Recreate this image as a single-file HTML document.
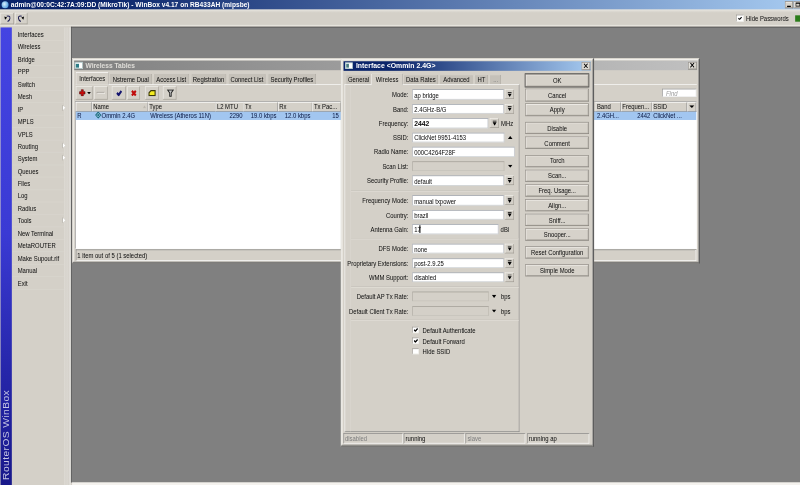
<!DOCTYPE html>
<html><head><meta charset="utf-8"><title>WinBox</title>
<style>
html,body{margin:0;padding:0;background:#d4d0c8;overflow:hidden;width:800px;height:485px;}
#root{position:absolute;left:0;top:0;filter:brightness(1);font-family:"Liberation Sans",sans-serif;font-size:11px;color:#101010;overflow:hidden;background:#d4d0c8;}
#root div,#root span,#root svg{position:absolute;box-sizing:border-box;}
.t{white-space:nowrap;line-height:14px;height:14px;-webkit-text-stroke:0.04px currentColor;}
.b{font-weight:bold;}
.w{color:#fff;}
.gray{color:#808080;}
.raised{border:1px solid;border-color:#fff #808080 #808080 #fff;background:#d4d0c8;}
.raised2{border:1px solid;border-color:#fff #404040 #404040 #fff;background:#d4d0c8;box-shadow:inset -1px -1px 0 #808080;}
.sunken{border:1px solid;border-color:#808080 #fff #fff #808080;background:#fff;box-shadow:inset 1px 1px 0 #404040;}
.sunkenflat{border:1px solid;border-color:#808080 #fff #fff #808080;background:#d4d0c8;}
.inp{border:1px solid;border-color:#8a8f98 #b4b8c0 #c4c8cc #a0a4ac;background:#fff;}
.inpd{border:1px solid;border-color:#9a968e #b8b4ac #c4c0b8 #a8a49c;background:#d4d0c8;}
.btn{border:1px solid;border-color:#8e8a84 #76726c #76726c #8e8a84;background:#d6d2ca;box-shadow:inset 1px 1px 0 #f6f4f0, inset -1px -1px 0 #b4b0a8;}
.win{background:#d4d0c8;border:1px solid;border-width:1px 2px 2px 1px;border-color:#dcd9d2 #5c5c5c #5c5c5c #dcd9d2;box-shadow:inset 1px 1px 0 #fff, inset -1px -1px 0 #808080, inset 2px 2px 0 #eceae4, inset 3px 3px 0 #e2dfd8;}
.raisedsoft{border:1px solid;border-color:#f4f2ee #9c988f #9c988f #f4f2ee;background:#d4d0c8;}
.chk{border:1px solid;border-color:#8c8880 #ecebe6 #ecebe6 #8c8880;background:#fff;}

#root{width:1488.0px;height:760.0px;transform:scale(0.537634,0.638158);transform-origin:0 0;}
</style></head><body><div id="root">
<div class="" style="left:0.0px;top:0.0px;width:1488.0px;height:15.2px;background:linear-gradient(to right,#0a246a 0%,#0a246a 12%,#a6caf0 100%);"></div>
<div class="" style="left:2.79px;top:1.88px;width:13.02px;height:11.28px;border-radius:50%;background:radial-gradient(circle at 40% 40%,#d8f0ff,#5aa0e0 70%,#2a60b0);"></div>
<span class="t b w" style="left:20.27px;top:-0.11px;font-size:12.2px;transform:scaleX(1.009);transform-origin:0 50%;-webkit-text-stroke:0;">admin@00:0C:42:7A:09:DD (MikroTik) - WinBox v4.17 on RB433AH (mipsbe)</span>
<div class="btn" style="left:1460.1px;top:2.35px;width:14.88px;height:10.5px;"></div>
<div class="" style="left:1464.38px;top:9.4px;width:6.88px;height:1.72px;background:#000;"></div>
<div class="btn" style="left:1475.91px;top:2.35px;width:13.95px;height:10.5px;"></div>
<div class="" style="left:1479.82px;top:4.39px;width:8.18px;height:5.64px;border:1px solid #000;border-top-width:2px;"></div>
<div class="" style="left:0.0px;top:15.2px;width:1488.0px;height:27.42px;background:linear-gradient(to bottom,#f2f0ea 0,#e0ddd6 1.6px,#d4d0c8 5px);"></div>
<div class="" style="left:0.0px;top:39.49px;width:1488.0px;height:1.57px;background:#e6e3dc;"></div>
<div class="raisedsoft" style="left:1.49px;top:19.59px;width:24.92px;height:18.65px;"></div>
<div class="raisedsoft" style="left:28.46px;top:19.59px;width:22.51px;height:18.65px;"></div>
<svg style="left:5.58px;top:22.72px;width:14.88px;height:12.54px" viewBox="3 14.5 8 8"><path d="M6.4 16.1C8.6 15.2 10.6 16.4 10.3 18.2C10 19.8 8.9 20.7 7.4 21.3" fill="none" stroke="#1c1c50" stroke-width="1.15"/><path d="M3.6 16.2L6.9 17.3 4.4 19.6z" fill="#000"/></svg>
<svg style="left:32.36px;top:22.72px;width:14.88px;height:12.54px" viewBox="-11 14.5 8 8"><g transform="scale(-1,1)"><path d="M6.4 16.1C8.6 15.2 10.6 16.4 10.3 18.2C10 19.8 8.9 20.7 7.4 21.3" fill="none" stroke="#1c1c50" stroke-width="1.15"/><path d="M3.6 16.2L6.9 17.3 4.4 19.6z" fill="#000"/></g></svg>
<div class="chk" style="left:1369.15px;top:23.19px;width:13.39px;height:10.97px;"></div>
<svg style="left:1371.75px;top:25.54px;width:8.93px;height:5.95px" viewBox="0 0 9 7"><path d="M1 3l2.4 2.5L8 1" fill="none" stroke="#000" stroke-width="2.3"/></svg>
<span class="t " style="left:1387.75px;top:22.15px;">Hide Passwords</span>
<div class="" style="left:1479.07px;top:23.51px;width:10.79px;height:10.97px;background:#2b7d1a;"></div>
<div class="" style="left:0.0px;top:42.62px;width:133.55px;height:717.38px;background:#d4d0c8;"></div>
<div class="" style="left:119.41px;top:42.62px;width:13.02px;height:717.38px;background:linear-gradient(to right,#d4d0c8 0,#dedbd5 10%,#d5d1ca 28%,#dcd9d3 45%,#d5d1ca 62%,#e0ddd8 82%,#e4e2dd 100%);"></div>
<div class="" style="left:1.3px;top:43.25px;width:20.83px;height:716.75px;background:linear-gradient(to bottom,#4444e2 0%,#3a3ad4 45%,#2626aa 75%,#18188a 100%);"></div>
<span class="t" style="left:10.23px;top:751.54px;color:#c4c4e4;font-size:15.5px;letter-spacing:0.6px;line-height:18px;height:18px;-webkit-text-stroke:0;transform-origin:0 50%;transform:translateY(-50%) scale(1.1870,0.8425) rotate(-90deg) scaleX(1.235);">RouterOS WinBox</span>
<span class="t " style="left:32.92px;top:46.75px;">Interfaces</span>
<div class="" style="left:23.06px;top:62.99px;width:95.98px;height:0.94px;background:#d9d6cf;"></div>
<span class="t " style="left:32.92px;top:66.24px;">Wireless</span>
<div class="" style="left:23.06px;top:82.49px;width:95.98px;height:0.94px;background:#d9d6cf;"></div>
<span class="t " style="left:32.92px;top:85.74px;">Bridge</span>
<div class="" style="left:23.06px;top:101.98px;width:95.98px;height:0.94px;background:#d9d6cf;"></div>
<span class="t " style="left:32.92px;top:105.23px;">PPP</span>
<div class="" style="left:23.06px;top:121.47px;width:95.98px;height:0.94px;background:#d9d6cf;"></div>
<span class="t " style="left:32.92px;top:124.72px;">Switch</span>
<div class="" style="left:23.06px;top:140.97px;width:95.98px;height:0.94px;background:#d9d6cf;"></div>
<span class="t " style="left:32.92px;top:144.22px;">Mesh</span>
<div class="" style="left:23.06px;top:160.46px;width:95.98px;height:0.94px;background:#d9d6cf;"></div>
<span class="t " style="left:32.92px;top:163.71px;">IP</span>
<div class="" style="left:23.06px;top:179.96px;width:95.98px;height:0.94px;background:#d9d6cf;"></div>
<svg style="left:114.58px;top:164.13px;width:7.44px;height:10.03px" viewBox="0 0 5 8"><path d="M0.3 0.2v7.6L4.4 4z" fill="#aaa69e"/><path d="M1.1 0.9v6.2L4.8 4z" fill="#fff"/></svg>
<span class="t " style="left:32.92px;top:183.2px;">MPLS</span>
<div class="" style="left:23.06px;top:199.45px;width:95.98px;height:0.94px;background:#d9d6cf;"></div>
<span class="t " style="left:32.92px;top:202.7px;">VPLS</span>
<div class="" style="left:23.06px;top:218.94px;width:95.98px;height:0.94px;background:#d9d6cf;"></div>
<span class="t " style="left:32.92px;top:222.19px;">Routing</span>
<div class="" style="left:23.06px;top:238.44px;width:95.98px;height:0.94px;background:#d9d6cf;"></div>
<svg style="left:114.58px;top:222.61px;width:7.44px;height:10.03px" viewBox="0 0 5 8"><path d="M0.3 0.2v7.6L4.4 4z" fill="#aaa69e"/><path d="M1.1 0.9v6.2L4.8 4z" fill="#fff"/></svg>
<span class="t " style="left:32.92px;top:241.68px;">System</span>
<div class="" style="left:23.06px;top:257.93px;width:95.98px;height:0.94px;background:#d9d6cf;"></div>
<svg style="left:114.58px;top:242.1px;width:7.44px;height:10.03px" viewBox="0 0 5 8"><path d="M0.3 0.2v7.6L4.4 4z" fill="#aaa69e"/><path d="M1.1 0.9v6.2L4.8 4z" fill="#fff"/></svg>
<span class="t " style="left:32.92px;top:261.18px;">Queues</span>
<div class="" style="left:23.06px;top:277.42px;width:95.98px;height:0.94px;background:#d9d6cf;"></div>
<span class="t " style="left:32.92px;top:280.67px;">Files</span>
<div class="" style="left:23.06px;top:296.92px;width:95.98px;height:0.94px;background:#d9d6cf;"></div>
<span class="t " style="left:32.92px;top:300.17px;">Log</span>
<div class="" style="left:23.06px;top:316.41px;width:95.98px;height:0.94px;background:#d9d6cf;"></div>
<span class="t " style="left:32.92px;top:319.66px;">Radius</span>
<div class="" style="left:23.06px;top:335.9px;width:95.98px;height:0.94px;background:#d9d6cf;"></div>
<span class="t " style="left:32.92px;top:339.15px;">Tools</span>
<div class="" style="left:23.06px;top:355.4px;width:95.98px;height:0.94px;background:#d9d6cf;"></div>
<svg style="left:114.58px;top:339.57px;width:7.44px;height:10.03px" viewBox="0 0 5 8"><path d="M0.3 0.2v7.6L4.4 4z" fill="#aaa69e"/><path d="M1.1 0.9v6.2L4.8 4z" fill="#fff"/></svg>
<span class="t " style="left:32.92px;top:358.65px;">New Terminal</span>
<div class="" style="left:23.06px;top:374.89px;width:95.98px;height:0.94px;background:#d9d6cf;"></div>
<span class="t " style="left:32.92px;top:378.14px;">MetaROUTER</span>
<div class="" style="left:23.06px;top:394.39px;width:95.98px;height:0.94px;background:#d9d6cf;"></div>
<span class="t " style="left:32.92px;top:397.63px;">Make Supout.rif</span>
<div class="" style="left:23.06px;top:413.88px;width:95.98px;height:0.94px;background:#d9d6cf;"></div>
<span class="t " style="left:32.92px;top:417.13px;">Manual</span>
<div class="" style="left:23.06px;top:433.37px;width:95.98px;height:0.94px;background:#d9d6cf;"></div>
<span class="t " style="left:32.92px;top:436.62px;">Exit</span>
<div class="" style="left:23.06px;top:452.87px;width:95.98px;height:0.94px;background:#d9d6cf;"></div>
<div class="" style="left:132.25px;top:41.53px;width:1355.75px;height:714.4px;background:#808080;border-left:1.5px solid #484848;border-top:1.3px solid #484848;"></div>
<div class="" style="left:133.55px;top:755.93px;width:1354.45px;height:4.07px;background:#f4f2ee;"></div>
<div class="win" style="left:133.92px;top:90.89px;width:1168.27px;height:322.49px;"></div>
<div class="" style="left:137.64px;top:94.96px;width:1159.15px;height:14.89px;background:linear-gradient(to right,#808080,#c0c0c0);"></div>
<div class="" style="left:139.13px;top:97.47px;width:15.25px;height:10.66px;background:#fff;border:1px solid #8aa;"></div>
<div class="" style="left:140.99px;top:99.66px;width:6.32px;height:6.58px;background:#2e7d86;"></div>
<span class="t b" style="left:159.22px;top:95.48px;color:#dddbd6;font-size:11.5px;transform:scaleX(1.07);transform-origin:0 50%;-webkit-text-stroke:0.1px #dddbd6;">Wireless Tables</span>
<div class="btn" style="left:1279.87px;top:97.0px;width:16.0px;height:12.38px;background:#dedbd4;"></div>
<svg style="left:1282.1px;top:98.41px;width:11.16px;height:8.15px" viewBox="0 0 8 8"><path d="M0.6 0.6l6.8 6.8M7.4 0.6l-6.8 6.8" stroke="#000" stroke-width="1.55"/></svg>
<div class="" style="left:140.62px;top:131.94px;width:1155.06px;height:1.25px;background:#fff;"></div>
<div class="" style="left:141.36px;top:112.82px;width:60.26px;height:20.37px;background:#d4d0c8;border:1px solid;border-color:#fff #808080 #d4d0c8 #fff;border-radius:2px 2px 0 0;"></div>
<span class="t " style="left:171.49px;top:115.54px;transform:translateX(-50%);">Interfaces</span>
<div class="" style="left:204.04px;top:115.33px;width:78.68px;height:16.61px;background:#c5c1b9;border:1px solid;border-color:#e4e1da #96928a transparent #e4e1da;border-radius:2px 2px 0 0;"></div>
<span class="t " style="left:243.38px;top:117.11px;transform:translateX(-50%);">Nstreme Dual</span>
<div class="" style="left:284.58px;top:115.33px;width:67.89px;height:16.61px;background:#c5c1b9;border:1px solid;border-color:#e4e1da #96928a transparent #e4e1da;border-radius:2px 2px 0 0;"></div>
<span class="t " style="left:318.53px;top:117.11px;transform:translateX(-50%);">Access List</span>
<div class="" style="left:354.52px;top:115.33px;width:66.96px;height:16.61px;background:#c5c1b9;border:1px solid;border-color:#e4e1da #96928a transparent #e4e1da;border-radius:2px 2px 0 0;"></div>
<span class="t " style="left:388.0px;top:117.11px;transform:translateX(-50%);">Registration</span>
<div class="" style="left:424.08px;top:115.33px;width:70.12px;height:16.61px;background:#c5c1b9;border:1px solid;border-color:#e4e1da #96928a transparent #e4e1da;border-radius:2px 2px 0 0;"></div>
<span class="t " style="left:459.14px;top:117.11px;transform:translateX(-50%);">Connect List</span>
<div class="" style="left:497.55px;top:115.33px;width:90.77px;height:16.61px;background:#c5c1b9;border:1px solid;border-color:#e4e1da #96928a transparent #e4e1da;border-radius:2px 2px 0 0;"></div>
<span class="t " style="left:542.93px;top:117.11px;transform:translateX(-50%);">Security Profiles</span>
<div class="raisedsoft" style="left:140.62px;top:135.23px;width:31.81px;height:20.84px;"></div>
<div class="raisedsoft" style="left:175.4px;top:135.23px;width:24.74px;height:20.84px;"></div>
<div class="raisedsoft" style="left:208.13px;top:135.23px;width:25.85px;height:20.84px;"></div>
<div class="raisedsoft" style="left:236.78px;top:135.23px;width:23.06px;height:20.84px;"></div>
<div class="raisedsoft" style="left:270.07px;top:135.23px;width:24.55px;height:20.84px;"></div>
<div class="raisedsoft" style="left:302.99px;top:135.23px;width:25.11px;height:20.84px;"></div>
<svg style="left:145.82px;top:140.25px;width:14.14px;height:10.97px" viewBox="0 0 10 10"><path d="M3.3 0.4h3.4v2.9h2.9v3.4H6.7v2.9H3.3V6.7H0.4V3.3h2.9z" fill="#c80c0c" stroke="#500808" stroke-width="0.9"/></svg>
<svg style="left:161.63px;top:144.16px;width:7.25px;height:3.92px" viewBox="0 0 6 3"><path d="M0 0h6l-3 3z" fill="#000"/></svg>
<div class="" style="left:180.42px;top:143.69px;width:14.32px;height:3.6px;border:1px solid;border-color:#a8a49c #f4f2ee #f4f2ee #a8a49c;background:#ccc8c0;"></div>
<svg style="left:215.39px;top:141.19px;width:13.39px;height:9.72px" viewBox="0 0 10 9"><path d="M1.2 4.2l2.9 3L8.8 1.6" fill="none" stroke="#14146e" stroke-width="3.3"/></svg>
<svg style="left:243.1px;top:141.34px;width:11.9px;height:10.03px" viewBox="0 0 8 8"><path d="M1.1 1.1l5.8 5.8M6.9 1.1L1.1 6.9" stroke="#c00c0c" stroke-width="3"/></svg>
<svg style="left:274.91px;top:140.87px;width:15.62px;height:9.87px" viewBox="0 0 12 9"><path d="M4.2 0.9h7v7.2H0.9V3.9z" fill="#f4ec20" stroke="#3a3808" stroke-width="1.8"/></svg>
<svg style="left:310.25px;top:140.09px;width:14.14px;height:11.91px" viewBox="0 0 10 10"><path d="M0.6 0.8h8.8L6.2 4.6v4.6H3.8V4.6z" fill="#c4c4c4" stroke="#202020" stroke-width="1.35"/></svg>
<div class="" style="left:1232.25px;top:138.52px;width:62.31px;height:13.79px;background:#fff;border:1px solid;border-color:#808080 #e8e8e8 #e8e8e8 #808080;"></div>
<span class="t " style="left:1238.76px;top:138.58px;color:#a0a0a0;font-style:italic;">Find</span>
<div class="" style="left:139.87px;top:158.89px;width:1155.8px;height:231.6px;background:#fff;border:1px solid;border-color:#808080 #fff #fff #808080;"></div>
<div class="" style="left:140.8px;top:159.84px;width:1154.13px;height:14.73px;background:#d4d0c8;border-bottom:1px solid #808080;"></div>
<div class="" style="left:140.8px;top:159.84px;width:30.32px;height:14.73px;border:1px solid;border-color:#fff #808080 #808080 #fff;background:#d4d0c8;overflow:hidden;"></div>
<div class="" style="left:171.12px;top:159.84px;width:104.16px;height:14.73px;border:1px solid;border-color:#fff #808080 #808080 #fff;background:#d4d0c8;overflow:hidden;"></div>
<span class="t " style="left:173.54px;top:160.2px;">Name</span>
<div class="" style="left:275.28px;top:159.84px;width:125.74px;height:14.73px;border:1px solid;border-color:#fff #808080 #808080 #fff;background:#d4d0c8;overflow:hidden;"></div>
<span class="t " style="left:277.7px;top:160.2px;">Type</span>
<div class="" style="left:401.02px;top:159.84px;width:52.27px;height:14.73px;border:1px solid;border-color:#fff #808080 #808080 #fff;background:#d4d0c8;overflow:hidden;"></div>
<span class="t " style="left:403.43px;top:160.2px;">L2 MTU</span>
<div class="" style="left:453.28px;top:159.84px;width:63.61px;height:14.73px;border:1px solid;border-color:#fff #808080 #808080 #fff;background:#d4d0c8;overflow:hidden;"></div>
<span class="t " style="left:455.7px;top:160.2px;">Tx</span>
<div class="" style="left:516.89px;top:159.84px;width:64.54px;height:14.73px;border:1px solid;border-color:#fff #808080 #808080 #fff;background:#d4d0c8;overflow:hidden;"></div>
<span class="t " style="left:519.31px;top:160.2px;">Rx</span>
<div class="" style="left:581.44px;top:159.84px;width:52.82px;height:14.73px;border:1px solid;border-color:#fff #808080 #808080 #fff;background:#d4d0c8;overflow:hidden;"></div>
<span class="t " style="left:583.85px;top:160.2px;">Tx Pac...</span>
<div class="" style="left:1107.82px;top:159.84px;width:47.24px;height:14.73px;border:1px solid;border-color:#fff #808080 #808080 #fff;background:#d4d0c8;overflow:hidden;"></div>
<span class="t " style="left:1110.23px;top:160.2px;">Band</span>
<div class="" style="left:1155.06px;top:159.84px;width:57.66px;height:14.73px;border:1px solid;border-color:#fff #808080 #808080 #fff;background:#d4d0c8;overflow:hidden;"></div>
<span class="t " style="left:1157.48px;top:160.2px;">Frequen...</span>
<div class="" style="left:1212.72px;top:159.84px;width:65.66px;height:14.73px;border:1px solid;border-color:#fff #808080 #808080 #fff;background:#d4d0c8;overflow:hidden;"></div>
<span class="t " style="left:1215.14px;top:160.2px;">SSID</span>
<div class="raised" style="left:1278.94px;top:159.84px;width:16.0px;height:14.73px;"></div>
<svg style="left:1281.35px;top:164.69px;width:11.53px;height:4.7px" viewBox="0 0 6 3"><path d="M0 0h6l-3 3z" fill="#000"/></svg>
<svg style="left:266.35px;top:165.16px;width:5.58px;height:4.7px" viewBox="0 0 6 5"><path d="M0 5h6l-3-5z" fill="#bcb8b0"/></svg>
<div class="" style="left:140.8px;top:174.88px;width:1154.13px;height:13.01px;background:#a2c6f0;"></div>
<span class="t " style="left:143.78px;top:173.99px;color:#0c1a44;">R</span>
<svg style="left:175.96px;top:174.88px;width:13.39px;height:10.66px" viewBox="0 0 10 10"><path d="M5 0.6L9.4 5 5 9.4 0.6 5z" fill="#9fc8e4" stroke="#1c6c7c" stroke-width="1.5"/><path d="M5 2.9L7.1 5 5 7.1 2.9 5z" fill="#1c6c7c"/></svg>
<span class="t " style="left:188.98px;top:173.99px;color:#0c1a44;">Ommin 2.4G</span>
<span class="t " style="left:279.37px;top:173.99px;color:#0c1a44;">Wireless (Atheros 11N)</span>
<span class="t " style="right:1036.76px;top:173.99px;color:#0c1a44;">2290</span>
<span class="t " style="right:973.9px;top:173.99px;color:#0c1a44;">19.0 kbps</span>
<span class="t " style="right:910.66px;top:173.99px;color:#0c1a44;">12.0 kbps</span>
<span class="t " style="right:857.83px;top:173.99px;color:#0c1a44;">15</span>
<span class="t " style="left:1110.42px;top:173.99px;color:#0c1a44;">2.4GH...</span>
<span class="t " style="right:278.26px;top:173.99px;color:#0c1a44;">2442</span>
<span class="t " style="left:1214.95px;top:173.99px;color:#0c1a44;">ClickNet ...</span>
<div class="" style="left:140.99px;top:391.13px;width:1154.32px;height:17.55px;border:1px solid;border-color:#808080 #fff #fff #808080;"></div>
<span class="t " style="left:143.78px;top:392.9px;">1 item out of 5 (1 selected)</span>
<div class="win" style="left:634.26px;top:90.57px;width:470.58px;height:608.94px;"></div>
<div class="" style="left:639.1px;top:95.74px;width:459.79px;height:15.36px;background:linear-gradient(to right,#0a246a 0%,#0a246a 20%,#a6caf0 100%);"></div>
<div class="" style="left:641.7px;top:97.78px;width:14.51px;height:10.34px;background:#fff;border:1px solid #9bb;"></div>
<div class="" style="left:643.56px;top:99.98px;width:5.95px;height:6.27px;background:#4a7d80;"></div>
<span class="t b w" style="left:661.6px;top:96.27px;font-size:11.5px;transform:scaleX(1.118);transform-origin:0 50%;-webkit-text-stroke:0;">Interface &lt;Ommin 2.4G&gt;</span>
<div class="btn" style="left:1082.15px;top:97.15px;width:15.62px;height:12.38px;background:#dedbd4;"></div>
<svg style="left:1084.38px;top:98.56px;width:11.16px;height:8.15px" viewBox="0 0 8 8"><path d="M0.6 0.6l6.8 6.8M7.4 0.6l-6.8 6.8" stroke="#000" stroke-width="1.55"/></svg>
<div class="" style="left:640.58px;top:132.26px;width:325.87px;height:544.69px;border:1px solid;border-color:#fff #808080 #808080 #fff;"></div>
<div class="" style="left:650.63px;top:134.14px;width:1.12px;height:541.56px;background:#dcd9d2;"></div>
<div class="" style="left:642.82px;top:116.59px;width:46.5px;height:15.67px;background:#c5c1b9;border:1px solid;border-color:#e4e1da #96928a transparent #e4e1da;border-radius:2px 2px 0 0;"></div>
<span class="t " style="left:666.81px;top:117.89px;transform:translateX(-50%);">General</span>
<div class="" style="left:689.69px;top:115.33px;width:59.15px;height:18.18px;background:#d4d0c8;border:1px solid;border-color:#fff #808080 #d4d0c8 #fff;border-radius:2px 2px 0 0;"></div>
<span class="t " style="left:720.01px;top:117.11px;transform:translateX(-50%);">Wireless</span>
<div class="" style="left:749.58px;top:116.59px;width:65.1px;height:15.67px;background:#c5c1b9;border:1px solid;border-color:#e4e1da #96928a transparent #e4e1da;border-radius:2px 2px 0 0;"></div>
<span class="t " style="left:782.87px;top:117.89px;transform:translateX(-50%);">Data Rates</span>
<div class="" style="left:817.1px;top:116.59px;width:61.94px;height:15.67px;background:#c5c1b9;border:1px solid;border-color:#e4e1da #96928a transparent #e4e1da;border-radius:2px 2px 0 0;"></div>
<span class="t " style="left:848.81px;top:117.89px;transform:translateX(-50%);">Advanced</span>
<div class="" style="left:881.64px;top:116.59px;width:26.04px;height:15.67px;background:#c5c1b9;border:1px solid;border-color:#e4e1da #96928a transparent #e4e1da;border-radius:2px 2px 0 0;"></div>
<span class="t " style="left:895.4px;top:117.89px;transform:translateX(-50%);">HT</span>
<div class="" style="left:909.91px;top:116.59px;width:22.51px;height:15.67px;background:#c5c1b9;border:1px solid;border-color:#e4e1da #96928a transparent #e4e1da;border-radius:2px 2px 0 0;"></div>
<span class="t gray" style="left:921.91px;top:117.89px;transform:translateX(-50%);">...</span>
<span class="t " style="right:728.38px;top:141.4px;">Mode:</span>
<div class="inp" style="left:766.69px;top:140.4px;width:170.38px;height:15.36px;"></div>
<span class="t " style="left:770.41px;top:142.02px;">ap bridge</span>
<div class="raisedsoft" style="left:938.93px;top:140.4px;width:17.48px;height:15.04px;"></div>
<svg style="left:942.83px;top:143.85px;width:10.04px;height:8.15px" viewBox="0 0 8 8"><path d="M0.6 0h6.8v1.3H0.6zM0.4 2.7h7.2L4 7.8z" fill="#000"/></svg>
<span class="t " style="right:728.38px;top:163.8px;">Band:</span>
<div class="inp" style="left:766.69px;top:162.81px;width:170.38px;height:15.36px;"></div>
<span class="t " style="left:770.41px;top:164.43px;">2.4GHz-B/G</span>
<div class="raisedsoft" style="left:938.93px;top:162.81px;width:17.48px;height:15.04px;"></div>
<svg style="left:942.83px;top:166.26px;width:10.04px;height:8.15px" viewBox="0 0 8 8"><path d="M0.6 0h6.8v1.3H0.6zM0.4 2.7h7.2L4 7.8z" fill="#000"/></svg>
<span class="t " style="right:728.38px;top:186.21px;">Frequency:</span>
<div class="inp" style="left:766.69px;top:185.22px;width:141.36px;height:15.36px;"></div>
<span class="t b" style="left:770.41px;top:186.84px;font-size:12.6px;">2442</span>
<div class="raisedsoft" style="left:911.03px;top:185.22px;width:17.48px;height:15.04px;"></div>
<svg style="left:914.93px;top:188.67px;width:10.04px;height:8.15px" viewBox="0 0 8 8"><path d="M0.6 0h6.8v1.3H0.6zM0.4 2.7h7.2L4 7.8z" fill="#000"/></svg>
<span class="t " style="left:931.86px;top:186.21px;">MHz</span>
<span class="t " style="right:728.38px;top:208.62px;">SSID:</span>
<div class="inp" style="left:766.69px;top:207.63px;width:171.31px;height:15.36px;"></div>
<span class="t " style="left:770.41px;top:209.25px;">ClickNet 9951-4153</span>
<svg style="left:943.76px;top:212.96px;width:10.04px;height:4.86px" viewBox="0 0 7 4"><path d="M0 4h7L3.5 0z" fill="#000"/></svg>
<span class="t " style="right:728.38px;top:231.19px;">Radio Name:</span>
<div class="inp" style="left:766.69px;top:230.19px;width:190.46px;height:15.36px;"></div>
<span class="t " style="left:770.41px;top:231.81px;">000C4264F28F</span>
<span class="t " style="right:728.38px;top:253.59px;">Scan List:</span>
<div class="inpd" style="left:766.69px;top:252.6px;width:171.31px;height:15.36px;"></div>
<svg style="left:943.76px;top:257.93px;width:10.04px;height:4.86px" viewBox="0 0 7 4"><path d="M0 0h7L3.5 4z" fill="#000"/></svg>
<span class="t " style="right:728.38px;top:276.16px;">Security Profile:</span>
<div class="inp" style="left:766.69px;top:275.17px;width:170.38px;height:15.36px;"></div>
<span class="t " style="left:770.41px;top:276.79px;">default</span>
<div class="raisedsoft" style="left:938.93px;top:275.17px;width:17.48px;height:15.04px;"></div>
<svg style="left:942.83px;top:278.61px;width:10.04px;height:8.15px" viewBox="0 0 8 8"><path d="M0.6 0h6.8v1.3H0.6zM0.4 2.7h7.2L4 7.8z" fill="#000"/></svg>
<span class="t " style="right:728.38px;top:307.34px;">Frequency Mode:</span>
<div class="inp" style="left:766.69px;top:306.35px;width:170.38px;height:15.36px;"></div>
<span class="t " style="left:770.41px;top:307.97px;">manual txpower</span>
<div class="raisedsoft" style="left:938.93px;top:306.35px;width:17.48px;height:15.04px;"></div>
<svg style="left:942.83px;top:309.8px;width:10.04px;height:8.15px" viewBox="0 0 8 8"><path d="M0.6 0h6.8v1.3H0.6zM0.4 2.7h7.2L4 7.8z" fill="#000"/></svg>
<span class="t " style="right:728.38px;top:329.91px;">Country:</span>
<div class="inp" style="left:766.69px;top:328.92px;width:170.38px;height:15.36px;"></div>
<span class="t " style="left:770.41px;top:330.53px;">brazil</span>
<div class="raisedsoft" style="left:938.93px;top:328.92px;width:17.48px;height:15.04px;"></div>
<svg style="left:942.83px;top:332.36px;width:10.04px;height:8.15px" viewBox="0 0 8 8"><path d="M0.6 0h6.8v1.3H0.6zM0.4 2.7h7.2L4 7.8z" fill="#000"/></svg>
<span class="t " style="right:728.38px;top:352.32px;">Antenna Gain:</span>
<div class="inp" style="left:766.69px;top:351.32px;width:159.96px;height:15.36px;"></div>
<span class="t " style="left:770.41px;top:352.94px;">17</span>
<span class="t " style="left:931.12px;top:352.32px;">dBi</span>
<div class="" style="left:780.46px;top:353.36px;width:1.12px;height:11.28px;background:#000;"></div>
<span class="t " style="right:728.38px;top:383.03px;">DFS Mode:</span>
<div class="inp" style="left:766.69px;top:382.04px;width:170.38px;height:15.36px;"></div>
<span class="t " style="left:770.41px;top:383.66px;">none</span>
<div class="raisedsoft" style="left:938.93px;top:382.04px;width:17.48px;height:15.04px;"></div>
<svg style="left:942.83px;top:385.48px;width:10.04px;height:8.15px" viewBox="0 0 8 8"><path d="M0.6 0h6.8v1.3H0.6zM0.4 2.7h7.2L4 7.8z" fill="#000"/></svg>
<span class="t " style="right:728.38px;top:405.59px;">Proprietary Extensions:</span>
<div class="inp" style="left:766.69px;top:404.6px;width:170.38px;height:15.36px;"></div>
<span class="t " style="left:770.41px;top:406.22px;">post-2.9.25</span>
<div class="raisedsoft" style="left:938.93px;top:404.6px;width:17.48px;height:15.04px;"></div>
<svg style="left:942.83px;top:408.05px;width:10.04px;height:8.15px" viewBox="0 0 8 8"><path d="M0.6 0h6.8v1.3H0.6zM0.4 2.7h7.2L4 7.8z" fill="#000"/></svg>
<span class="t " style="right:728.38px;top:427.69px;">WMM Support:</span>
<div class="inp" style="left:766.69px;top:426.7px;width:170.38px;height:15.36px;"></div>
<span class="t " style="left:770.41px;top:428.32px;">disabled</span>
<div class="raisedsoft" style="left:938.93px;top:426.7px;width:17.48px;height:15.04px;"></div>
<svg style="left:942.83px;top:430.14px;width:10.04px;height:8.15px" viewBox="0 0 8 8"><path d="M0.6 0h6.8v1.3H0.6zM0.4 2.7h7.2L4 7.8z" fill="#000"/></svg>
<span class="t " style="right:728.38px;top:457.93px;">Default AP Tx Rate:</span>
<div class="inpd" style="left:766.69px;top:456.94px;width:142.48px;height:15.36px;"></div>
<svg style="left:914.0px;top:462.27px;width:10.04px;height:4.86px" viewBox="0 0 7 4"><path d="M0 0h7L3.5 4z" fill="#000"/></svg>
<span class="t " style="left:931.86px;top:457.93px;">bps</span>
<span class="t " style="right:728.38px;top:480.81px;">Default Client Tx Rate:</span>
<div class="inpd" style="left:766.69px;top:479.82px;width:142.48px;height:15.36px;"></div>
<svg style="left:914.0px;top:485.15px;width:10.04px;height:4.86px" viewBox="0 0 7 4"><path d="M0 0h7L3.5 4z" fill="#000"/></svg>
<span class="t " style="left:931.86px;top:480.81px;">bps</span>
<div class="" style="left:652.86px;top:297.58px;width:311.74px;height:2.04px;border-top:1px solid #c0bcb4;border-bottom:1px solid #e6e3dc;"></div>
<div class="" style="left:652.86px;top:373.42px;width:311.74px;height:2.04px;border-top:1px solid #c0bcb4;border-bottom:1px solid #e6e3dc;"></div>
<div class="" style="left:652.86px;top:448.79px;width:311.74px;height:2.04px;border-top:1px solid #c0bcb4;border-bottom:1px solid #e6e3dc;"></div>
<div class="" style="left:652.86px;top:501.13px;width:311.74px;height:2.04px;border-top:1px solid #c0bcb4;border-bottom:1px solid #e6e3dc;"></div>
<div class="chk" style="left:767.44px;top:512.41px;width:11.35px;height:9.56px;"></div>
<svg style="left:768.74px;top:513.98px;width:9.11px;height:6.42px" viewBox="0 0 9 7"><path d="M1 3l2.4 2.5L8 1" fill="none" stroke="#000" stroke-width="2.5"/></svg>
<span class="t " style="left:786.04px;top:510.74px;">Default Authenticate</span>
<div class="chk" style="left:767.44px;top:529.18px;width:11.35px;height:9.56px;"></div>
<svg style="left:768.74px;top:530.75px;width:9.11px;height:6.42px" viewBox="0 0 9 7"><path d="M1 3l2.4 2.5L8 1" fill="none" stroke="#000" stroke-width="2.5"/></svg>
<span class="t " style="left:786.04px;top:527.51px;">Default Forward</span>
<div class="chk" style="left:767.44px;top:545.79px;width:11.35px;height:9.56px;"></div>
<span class="t " style="left:786.04px;top:544.12px;">Hide SSID</span>
<div class="btn" style="left:977.06px;top:116.43px;width:118.3px;height:19.27px;"></div>
<span class="t " style="left:1036.39px;top:119.14px;transform:translateX(-50%);">OK</span>
<div class="btn" style="left:977.06px;top:139.31px;width:118.3px;height:19.27px;"></div>
<span class="t " style="left:1036.39px;top:142.02px;transform:translateX(-50%);">Cancel</span>
<div class="btn" style="left:977.06px;top:162.34px;width:118.3px;height:19.27px;"></div>
<span class="t " style="left:1036.39px;top:165.06px;transform:translateX(-50%);">Apply</span>
<div class="btn" style="left:977.06px;top:191.02px;width:118.3px;height:19.27px;"></div>
<span class="t " style="left:1036.39px;top:193.73px;transform:translateX(-50%);">Disable</span>
<div class="btn" style="left:977.06px;top:214.21px;width:118.3px;height:19.27px;"></div>
<span class="t " style="left:1036.39px;top:216.93px;transform:translateX(-50%);">Comment</span>
<div class="btn" style="left:977.06px;top:242.73px;width:118.3px;height:19.27px;"></div>
<span class="t " style="left:1036.39px;top:245.45px;transform:translateX(-50%);">Torch</span>
<div class="btn" style="left:977.06px;top:265.76px;width:118.3px;height:19.27px;"></div>
<span class="t " style="left:1036.39px;top:268.48px;transform:translateX(-50%);">Scan...</span>
<div class="btn" style="left:977.06px;top:289.11px;width:118.3px;height:19.27px;"></div>
<span class="t " style="left:1036.39px;top:291.83px;transform:translateX(-50%);">Freq. Usage...</span>
<div class="btn" style="left:977.06px;top:311.84px;width:118.3px;height:19.27px;"></div>
<span class="t " style="left:1036.39px;top:314.55px;transform:translateX(-50%);">Align...</span>
<div class="btn" style="left:977.06px;top:334.87px;width:118.3px;height:19.27px;"></div>
<span class="t " style="left:1036.39px;top:337.59px;transform:translateX(-50%);">Sniff...</span>
<div class="btn" style="left:977.06px;top:358.06px;width:118.3px;height:19.27px;"></div>
<span class="t " style="left:1036.39px;top:360.78px;transform:translateX(-50%);">Snooper...</span>
<div class="btn" style="left:977.06px;top:385.95px;width:118.3px;height:19.27px;"></div>
<span class="t " style="left:1036.39px;top:388.67px;transform:translateX(-50%);">Reset Configuration</span>
<div class="btn" style="left:977.06px;top:414.16px;width:118.3px;height:19.27px;"></div>
<span class="t " style="left:1036.39px;top:416.88px;transform:translateX(-50%);">Simple Mode</span>
<div class="" style="left:975.94px;top:115.49px;width:120.53px;height:21.15px;border:1.4px solid #383838;"></div>
<div class="" style="left:638.72px;top:678.99px;width:110.11px;height:16.3px;border:1px solid;border-color:#808080 #fff #fff #808080;"></div>
<span class="t gray" style="left:641.7px;top:680.45px;">disabled</span>
<div class="" style="left:751.44px;top:678.99px;width:112.53px;height:16.3px;border:1px solid;border-color:#808080 #fff #fff #808080;"></div>
<span class="t " style="left:754.42px;top:680.45px;">running</span>
<div class="" style="left:866.39px;top:678.99px;width:110.86px;height:16.3px;border:1px solid;border-color:#808080 #fff #fff #808080;"></div>
<span class="t gray" style="left:869.36px;top:680.45px;">slave</span>
<div class="" style="left:980.59px;top:678.99px;width:115.32px;height:16.3px;border:1px solid;border-color:#808080 #fff #fff #808080;"></div>
<span class="t " style="left:983.57px;top:680.45px;">running ap</span>
</div></body></html>
